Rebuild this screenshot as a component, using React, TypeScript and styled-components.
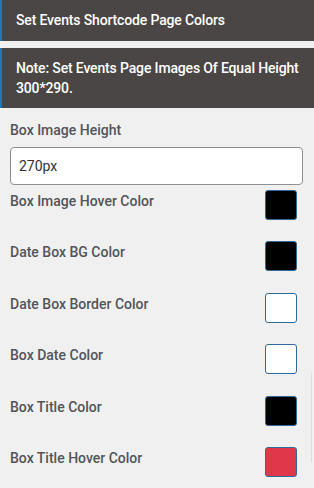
import React from "react";
import styled, { createGlobalStyle } from "styled-components";

const Global = createGlobalStyle`
  html, body { margin: 0; padding: 0; background: #f0f0f0; }
  body { font-family: Roboto, "Noto Sans", Arial, sans-serif; }
  * { box-sizing: border-box; }
`;

const Page = styled.div`
  width: 314px;
  height: 488px;
  background: #f0f0f0;
  overflow: hidden;
  display: flex;
  flex-direction: column;
  position: relative;
`;

const Banner = styled.div<{ $tall?: boolean }>`
  background: #4a4645;
  border-left: 2px solid #1f78bd;
  color: #ffffff;
  font-size: 14px;
  font-weight: 500;
  letter-spacing: -0.15px;
  line-height: 20.5px;
  padding: ${(p) => (p.$tall ? "10px 2px 9px 14px" : "10px 10px 10px 14px")};
  margin-bottom: ${(p) => (p.$tall ? "0" : "7px")};
  height: ${(p) => (p.$tall ? "60px" : "41px")};
`;

const Body = styled.div`
  padding: 12px 11px 0 10px;
  display: flex;
  flex-direction: column;
`;

const Label = styled.div`
  font-size: 14px;
  font-weight: 500;
  color: #50555a;
  line-height: 20px;
`;

const TextInput = styled.input`
  margin-top: 7px;
  margin-bottom: 6px;
  width: 293px;
  height: 38px;
  border: 1px solid #8c8f94;
  border-radius: 4px;
  background: #ffffff;
  padding: 0 8px;
  font-family: Roboto, "Noto Sans", Arial, sans-serif;
  font-size: 14px;
  color: #2c3338;
  outline: none;
`;

const ColorRow = styled.div`
  display: flex;
  justify-content: space-between;
  align-items: flex-start;
  height: 51.6px;
`;

const Swatch = styled.div<{ $color: string }>`
  width: 32px;
  height: 30px;
  margin-right: 6px;
  margin-top: -1px;
  border-radius: 3px;
  border: 1px solid #2f6a9a;
  background: ${(p) => p.$color};
`;

const EdgeShade = styled.div`
  position: absolute;
  right: 2px;
  top: 372px;
  width: 1px;
  height: 90px;
  background: #dddddd;
`;

const rows = [
  { label: "Box Image Hover Color", color: "#000000" },
  { label: "Date Box BG Color", color: "#000000" },
  { label: "Date Box Border Color", color: "#ffffff" },
  { label: "Box Date Color", color: "#ffffff" },
  { label: "Box Title Color", color: "#000000" },
  { label: "Box Title Hover Color", color: "#e0374b" },
];

export default function App() {
  return (
    <Page>
      <Global />
      <Banner>Set Events Shortcode Page Colors</Banner>
      <Banner $tall>Note: Set Events Page Images Of Equal Height 300*290.</Banner>
      <Body>
        <Label>Box Image Height</Label>
        <TextInput defaultValue="270px" />
        {rows.map((r) => (
          <ColorRow key={r.label}>
            <Label>{r.label}</Label>
            <Swatch $color={r.color} />
          </ColorRow>
        ))}
      </Body>
      <EdgeShade />
    </Page>
  );
}
